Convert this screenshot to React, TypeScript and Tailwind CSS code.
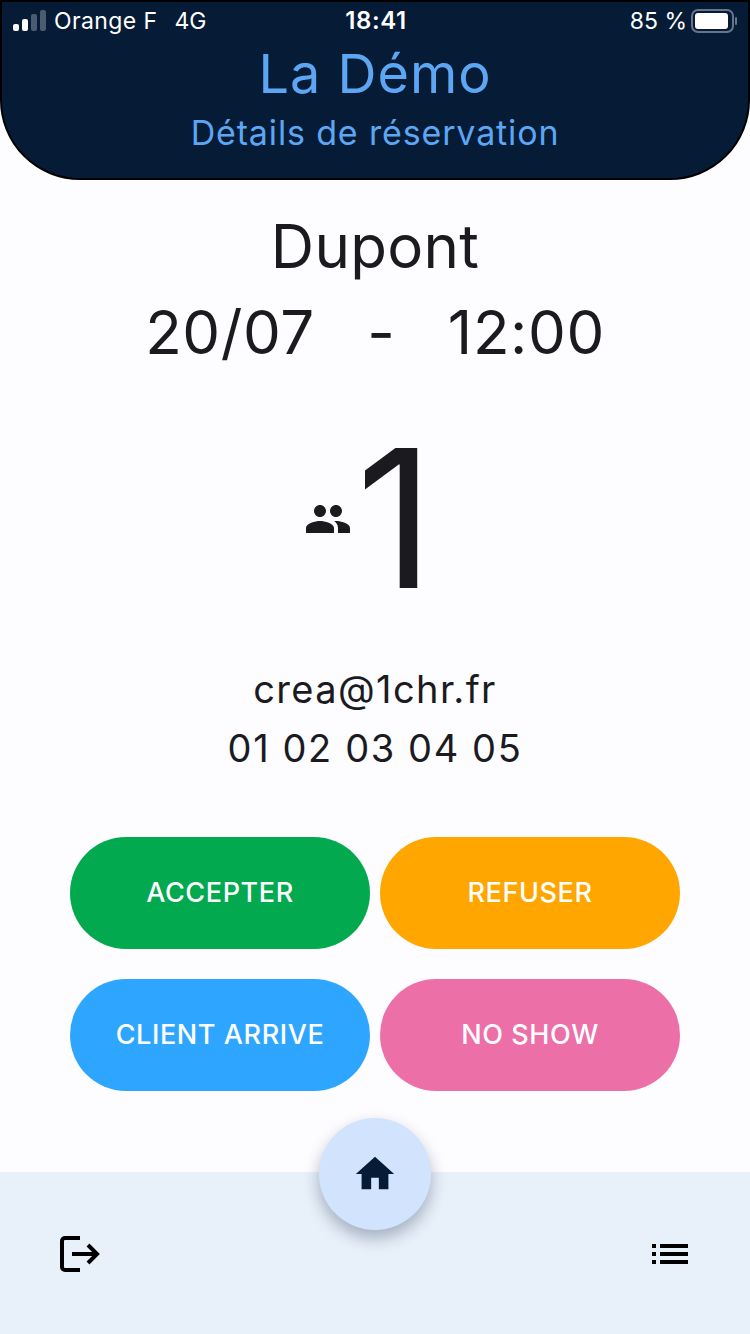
import React from 'react';

const font = "font-['Inter',sans-serif]";

const SignalBars = () => (
  <svg width="34" height="22" viewBox="0 0 34 22" className="shrink-0">
    <rect x="0" y="14" width="6" height="7" rx="2" fill="#ffffff" />
    <rect x="9" y="9" width="6" height="12" rx="2" fill="#ffffff" />
    <rect x="18" y="4" width="6" height="17" rx="2" fill="#4b5c70" />
    <rect x="27" y="0" width="6" height="21" rx="2" fill="#4b5c70" />
  </svg>
);

const Battery = () => (
  <svg width="48" height="24" viewBox="0 0 48 24" className="shrink-0">
    <rect x="1" y="1" width="41" height="22" rx="6" fill="none" stroke="#66758a" strokeWidth="2" />
    <rect x="4" y="4" width="33" height="16" rx="3" fill="#ffffff" />
    <rect x="44" y="8" width="2" height="8" rx="1" fill="#66758a" />
  </svg>
);

const StatusBar = () => (
  <div className="grid h-[38px] grid-cols-3 items-center pl-[11px] pr-[9px] text-[23px] text-white">
    <div className="flex items-center gap-[7px] whitespace-nowrap">
      <SignalBars />
      <span className="tracking-[0.4px]">Orange F</span>
      <span className="ml-[10px]">4G</span>
    </div>
    <div className="text-center text-[24px] font-semibold tracking-[0.6px]">18:41</div>
    <div className="flex items-center justify-end gap-[4px]">
      <span>85 %</span>
      <Battery />
    </div>
  </div>
);

const ActionButton = ({ label, color }: { label: string; color: string }) => (
  <button className={`flex h-[112px] w-[300px] items-center justify-center rounded-full text-[27px] font-medium tracking-[0.6px] text-white ${color}`}>
    {label}
  </button>
);

export default function App() {
  return (
    <div className={`relative flex h-[1334px] w-[750px] flex-col overflow-hidden bg-[#fdfcff] ${font}`}>
      {/* Header */}
      <div className="h-[180px] rounded-b-[80px] border-2 border-black bg-[#061c36]">
        <StatusBar />
        <div className="mt-[2px] text-center text-[54px] leading-[64px] tracking-[1px] text-[#5ca6f4]">La Démo</div>
        <div className="mt-[5px] text-center text-[34px] leading-[44px] tracking-[0.85px] text-[#5ca6f4]">Détails de réservation</div>
      </div>

      {/* Reservation */}
      <div className="flex flex-1 flex-col items-center text-[#1b1b1f]">
        <div className="mt-[30px] text-[60px] leading-[72px] tracking-[0.3px]">Dupont</div>
        <div className="mt-[14px] whitespace-pre text-[60px] leading-[72px] tracking-[0.6px]">20/07   -   12:00</div>

        <div className="mt-[25px] flex h-[250px] items-center justify-center pr-[12px]">
          <svg width="48" height="48" viewBox="0 0 24 24" fill="currentColor" className="mr-[4px] mt-[2px]">
            <path d="M16 11c1.66 0 2.99-1.34 2.99-3S17.66 5 16 5c-1.66 0-3 1.34-3 3s1.34 3 3 3zm-8 0c1.66 0 2.99-1.34 2.99-3S9.66 5 8 5C6.34 5 5 6.34 5 8s1.34 3 3 3zm0 2c-2.33 0-7 1.17-7 3.5V19h14v-2.5c0-2.33-4.67-3.5-7-3.5zm8 0c-.29 0-.62.02-.97.05 1.16.84 1.97 1.97 1.97 3.45V19h6v-2.5c0-2.33-4.67-3.5-7-3.5z" />
          </svg>
          <span className="text-[192px] font-normal leading-[250px]">1</span>
        </div>

        <div className="mt-[22px] text-[38px] leading-[48px] tracking-[1.4px]">crea@1chr.fr</div>
        <div className="mt-[11px] text-[38px] leading-[48px] tracking-[1.6px]">01 02 03 04 05</div>

        {/* Actions */}
        <div className="mt-[65px] grid w-[610px] grid-cols-2 gap-x-[10px] gap-y-[30px]">
          <ActionButton label="ACCEPTER" color="bg-[#02a94f]" />
          <ActionButton label="REFUSER" color="bg-[#ffa600]" />
          <ActionButton label="CLIENT ARRIVE" color="bg-[#2ea6ff]" />
          <ActionButton label="NO SHOW" color="bg-[#ec6fa8]" />
        </div>
      </div>

      {/* Bottom bar */}
      <div className="relative flex h-[162px] items-start justify-between bg-[#e8f0fa] pl-[56px] pr-[56px] pt-[58px]">
        <svg width="48" height="48" viewBox="0 0 48 48" fill="none" stroke="#000000" strokeWidth="4">
          <path d="M24 8H9a3 3 0 0 0-3 3v26a3 3 0 0 0 3 3h15" />
          <path d="M16 24h24" />
          <path d="M32 15l9 9-9 9" />
        </svg>
        <svg width="48" height="48" viewBox="0 0 24 24" fill="#000000">
          <path d="M3 13h2v-2H3v2zm0 4h2v-2H3v2zm0-8h2V7H3v2zm4 4h14v-2H7v2zm0 4h14v-2H7v2zM7 7v2h14V7H7z" />
        </svg>

        <button className="absolute -top-[54px] left-[319px] flex h-[112px] w-[112px] items-center justify-center rounded-full bg-[#d2e4fd] shadow-[0_8px_16px_rgba(6,28,54,0.3)]">
          <svg width="46" height="46" viewBox="0 0 24 24" fill="#061c36">
            <path d="M10 20v-6h4v6h5v-8h3L12 3 2 12h3v8z" />
          </svg>
        </button>
      </div>
    </div>
  );
}
